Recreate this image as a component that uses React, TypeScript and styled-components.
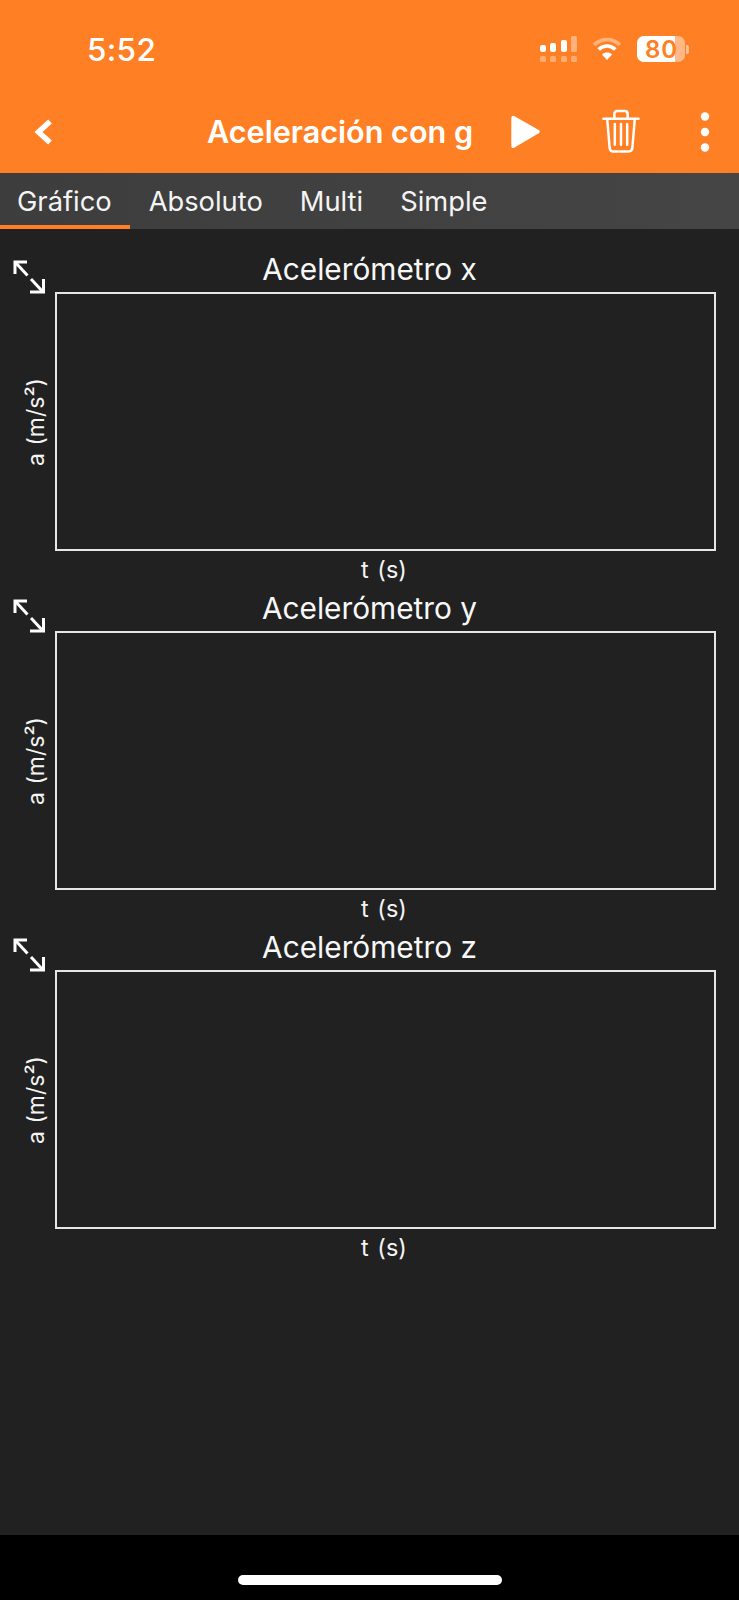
import React from "react";
import styled, { createGlobalStyle } from "styled-components";

const GlobalStyle = createGlobalStyle`
  html, body {
    margin: 0;
    padding: 0;
    background: #000000;
  }
  body {
    font-family: Inter, "Noto Sans", sans-serif;
    color: #ffffff;
  }
`;

const Screen = styled.div`
  width: 739px;
  height: 1600px;
  display: flex;
  flex-direction: column;
  overflow: hidden;
  background: #000000;
`;
const Header = styled.header`
  height: 173px;
  flex: none;
  background: #ff7f24;
  display: flex;
  flex-direction: column;
`;
const StatusBar = styled.div`
  height: 96px;
  display: flex;
  align-items: center;
  justify-content: space-between;
  padding: 2px 50px 0 87px;
  box-sizing: border-box;
`;
const Clock = styled.div`
  font-size: 31.5px;
  font-weight: 500;
  letter-spacing: 0.3px;
`;
const StatusIcons = styled.div`
  display: flex;
  align-items: center;
  gap: 15px;
`;
const BatteryGroup = styled.div`
  display: flex;
  align-items: center;
  gap: 1px;
`;
const Battery = styled.div`
  position: relative;
  width: 48px;
  height: 26px;
  border-radius: 7px;
  overflow: hidden;
  background: rgba(255, 255, 255, 0.45);
  display: flex;
`;
const BatteryFill = styled.div`
  width: 38px;
  background: #ffffff;
`;
const BatteryText = styled.div`
  position: absolute;
  inset: 0;
  display: flex;
  align-items: center;
  padding-left: 8px;
  font-size: 24px;
  font-weight: 600;
  letter-spacing: 1px;
  color: #ff7f24;
`;
const BatteryTip = styled.div`
  width: 3px;
  height: 9px;
  border-radius: 0 2px 2px 0;
  background: rgba(255, 255, 255, 0.5);
`;
const Toolbar = styled.div`
  flex: 1;
  display: flex;
  align-items: center;
  padding-bottom: 6px;
`;
const BackSlot = styled.div`
  width: 207px;
  padding-left: 33px;
  box-sizing: border-box;
  display: flex;
`;
const Title = styled.div`
  width: 265px;
  font-size: 30.6px;
  font-weight: 600;
  white-space: nowrap;
`;
const ActionSlot = styled.div<{ $gap: number }>`
  margin-left: ${(p) => p.$gap}px;
  display: flex;
  flex: none;
`;
const Tabs = styled.nav`
  height: 56px;
  flex: none;
  box-sizing: border-box;
  background: linear-gradient(90deg, #3d3d3d, #454545);
  display: flex;
`;
const Tab = styled.div<{ $active?: boolean }>`
  box-sizing: border-box;
  padding: 4px 18px 0 17px;
  display: flex;
  align-items: center;
  font-size: 27.3px;
  margin-right: 2px;
  color: #f4f4f4;
  border-bottom: 4px solid ${(p) => (p.$active ? "#ff7f24" : "transparent")};
`;
const Content = styled.main`
  height: 1306px;
  flex: none;
  background: #212121;
  padding-top: 25px;
  box-sizing: border-box;
  display: flex;
  flex-direction: column;
`;
const PlotRow = styled.section`
  height: 339px;
  flex: none;
  display: grid;
  grid-template-columns: 55px 661px;
  grid-template-rows: 38px 259px 42px;
`;
const ExpandSlot = styled.div`
  grid-column: 1;
  grid-row: 1;
  padding: 6px 0 0 13px;
`;
const PlotTitle = styled.div`
  grid-column: 2;
  grid-row: 1;
  text-align: center;
  font-size: 29.8px;
  line-height: 30px;
  margin-left: -32px;
  color: #f7f7f7;
`;
const YLabelSlot = styled.div`
  grid-column: 1;
  grid-row: 2;
  display: flex;
  align-items: center;
  justify-content: flex-end;
  padding-right: 6px;
`;
const YLabel = styled.div`
  writing-mode: vertical-rl;
  transform: rotate(180deg);
  font-size: 23px;
  line-height: 26px;
  word-spacing: 1px;
  white-space: nowrap;
  color: #f4f4f4;
`;
const PlotFrame = styled.div`
  grid-column: 2;
  grid-row: 2;
  border: 2px solid #e6e6e6;
  box-sizing: border-box;
`;
const XLabel = styled.div`
  grid-column: 2;
  grid-row: 3;
  text-align: center;
  font-size: 23.5px;
  line-height: 38px;
  word-spacing: 2px;
  margin-right: 3px;
  color: #f4f4f4;
`;
const BottomBar = styled.div`
  flex: 1;
  background: #000000;
  display: flex;
  justify-content: center;
  padding-top: 40px;
`;
const HomeBar = styled.div`
  width: 264px;
  height: 10px;
  border-radius: 5px;
  background: #ffffff;
`;

const SignalIcon = () => (
  <svg width="37" height="26" viewBox="0 0 37 26" fill="#fff">
    <rect x="0" y="9" width="6" height="7" rx="2" />
    <rect x="10" y="7" width="6" height="9" rx="2" />
    <rect x="21" y="4" width="6" height="12" rx="2" />
    <rect x="31" y="0" width="6" height="16" rx="1.5" opacity="0.4" />
    <g opacity="0.35">
      <rect x="0" y="20" width="6" height="6" rx="1.5" />
      <rect x="10" y="20" width="6" height="6" rx="1.5" />
      <rect x="21" y="20" width="6" height="6" rx="1.5" />
      <rect x="31" y="20" width="6" height="6" rx="1.5" />
    </g>
  </svg>
);

const WifiIcon = () => (
  <svg width="30" height="24" viewBox="0 0 32 26" fill="none" stroke="#fff" strokeWidth="4">
    <path d="M2 8.5 C10 1 22 1 30 8.5" opacity="0.4" />
    <path d="M7 13.5 C12 8.5 20 8.5 25 13.5" />
    <path d="M16 25 L10.5 19 C13.5 16.2 18.5 16.2 21.5 19 Z" fill="#fff" stroke="none" />
  </svg>
);

const BackIcon = () => (
  <svg width="20" height="26" viewBox="0 0 20 26" fill="none" stroke="#fff" strokeWidth="5.5">
    <path d="M17 2.5 L5.5 13 L17 23.5" />
  </svg>
);

const PlayIcon = () => (
  <svg width="31" height="34" viewBox="0 0 32 36" fill="#fff">
    <path d="M1 3 C1 1 2.5 0.3 4 1 L30 15.8 C31.5 16.8 31.5 18.4 30 19.4 L4 34.6 C2.5 35.4 1 34.6 1 33 Z" />
  </svg>
);

const TrashIcon = () => (
  <svg width="38" height="45" viewBox="0 0 40 46" fill="none" stroke="#fff" strokeWidth="2.6" strokeLinecap="round">
    <path d="M1.5 9.5 H38.5" />
    <path d="M13 9 V4.5 Q13 1.5 16 1.5 H24 Q27 1.5 27 4.5 V9" />
    <path d="M5.5 10 L8 40 Q8.4 44 12 44 H28 Q31.6 44 32 40 L34.5 10" />
    <path d="M13.5 15 V37 M20 15 V37 M26.5 15 V37" />
  </svg>
);

const MoreIcon = () => (
  <svg width="10" height="40" viewBox="0 0 10 40" fill="#fff">
    <circle cx="5" cy="4.5" r="4.2" />
    <circle cx="5" cy="20" r="4.2" />
    <circle cx="5" cy="35.5" r="4.2" />
  </svg>
);

const ExpandIcon = () => (
  <svg width="32" height="34" viewBox="0 0 32 34" fill="none" stroke="#fff" strokeWidth="3">
    <path d="M2 14 V2 H14" />
    <path d="M2.5 2.5 L14.5 15.5" />
    <path d="M18 19 L30 32" />
    <path d="M17 32 H30.5 V19" />
  </svg>
);

const plots = ["x", "y", "z"];
const tabs = ["Gráfico", "Absoluto", "Multi", "Simple"];

const App = () => {
  return (
    <Screen>
      <GlobalStyle />
      <Header>
        <StatusBar>
          <Clock>5:52</Clock>
          <StatusIcons>
            <SignalIcon />
            <WifiIcon />
            <BatteryGroup>
              <Battery>
                <BatteryFill />
                <BatteryText>80</BatteryText>
              </Battery>
              <BatteryTip />
            </BatteryGroup>
          </StatusIcons>
        </StatusBar>
        <Toolbar>
          <BackSlot>
            <BackIcon />
          </BackSlot>
          <Title>Aceleración con g</Title>
          <ActionSlot $gap={38}>
            <PlayIcon />
          </ActionSlot>
          <ActionSlot $gap={61}>
            <TrashIcon />
          </ActionSlot>
          <ActionSlot $gap={60}>
            <MoreIcon />
          </ActionSlot>
        </Toolbar>
      </Header>
      <Tabs>
        {tabs.map((tab, index) => (
          <Tab key={tab} $active={index === 0}>
            {tab}
          </Tab>
        ))}
      </Tabs>
      <Content>
        {plots.map((axis) => (
          <PlotRow key={axis}>
            <ExpandSlot>
              <ExpandIcon />
            </ExpandSlot>
            <PlotTitle>Acelerómetro {axis}</PlotTitle>
            <YLabelSlot>
              <YLabel>a (m/s²)</YLabel>
            </YLabelSlot>
            <PlotFrame />
            <XLabel>t (s)</XLabel>
          </PlotRow>
        ))}
      </Content>
      <BottomBar>
        <HomeBar />
      </BottomBar>
    </Screen>
  );
};

export default App;
